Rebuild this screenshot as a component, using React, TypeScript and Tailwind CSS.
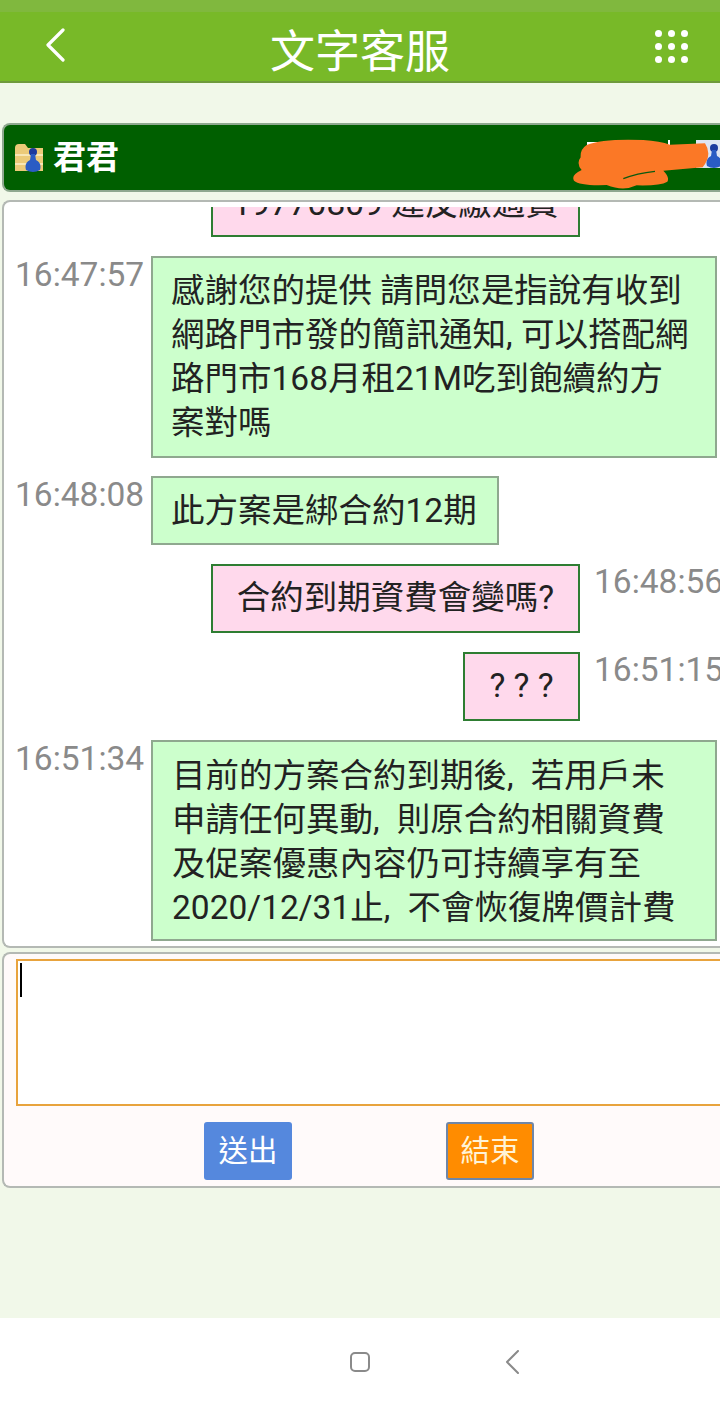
const CJK = "font-['Roboto','Noto_Sans_CJK_TC',sans-serif]";

function PersonIcon({ withFolder }: { withFolder?: boolean }) {
  return (
    <svg width="30" height="30" viewBox="0 0 30 30">
      {withFolder ? (
        <>
          <path d="M1 5 Q1 1 5 1 L11 1 L14 5 L29 5 L29 28 L1 28 Z" fill="#ecca78" />
          <path d="M1 12 L29 12 M1 21 L29 21" stroke="#f8e6b4" strokeWidth="2" />
        </>
      ) : (
        <rect x="1" y="1" width="28" height="28" fill="#dfe5f2" />
      )}
      <circle cx="19" cy="9" r="4" fill="#1c3a9e" />
      <path d="M17 11 L21 11 L22 17 Q28 20 26 27 Q19 31 12 27 Q10 20 16 17 Z" fill="#2a5cc4" />
    </svg>
  );
}

function Incoming({ time, lines, pad }: { time: string; lines: string[]; pad: string }) {
  return (
    <div className="flex items-start">
      <div className="w-[147px] shrink-0 whitespace-nowrap pl-[11px] pt-px text-[33.5px] leading-9 text-[#8a8a8a]">{time}</div>
      <div className={`${pad} border-2 border-[#8fa88f] bg-[#ccffcc] text-[33.5px] leading-[44px] text-[#222]`}>
        {lines.map((l) => (
          <div key={l} className="whitespace-nowrap">{l}</div>
        ))}
      </div>
    </div>
  );
}

function Outgoing({ time, text, width }: { time: string; text: string; width: string }) {
  return (
    <div className="flex items-start">
      <div className={`ml-auto h-[69px] ${width} border-2 border-[#2e7d32] bg-[#ffd9ec] text-center text-[33.5px] leading-[64px] text-[#222] whitespace-nowrap`}>
        {text}
      </div>
      <div className="ml-[14px] w-[126px] shrink-0 whitespace-nowrap text-[33.5px] leading-9 text-[#8a8a8a]">{time}</div>
    </div>
  );
}

export default function App() {
  return (
    <div className={`flex h-[1405px] w-[720px] flex-col overflow-hidden bg-[#f1f8e9] ${CJK}`}>
      <div className="h-3 bg-[#80b83e]" />
      <header className="flex h-[71px] items-center justify-between border-b-2 border-[#6f9a3c] bg-[#78b928] pl-[45px] pr-[32px] text-white">
        <svg width="20" height="34" viewBox="0 0 20 34" className="-mt-[3px]" fill="none" stroke="currentColor" strokeWidth="3.2" strokeLinecap="round" strokeLinejoin="round">
          <path d="M18 2 L3 17 L18 32" />
        </svg>
        <h1 className="mt-3 text-[45px] leading-none">文字客服</h1>
        <div className="grid grid-cols-3 gap-[6px]">
          {Array.from({ length: 9 }).map((_, i) => (
            <span key={i} className="h-[7px] w-[7px] rounded-full bg-white" />
          ))}
        </div>
      </header>

      <div className="relative ml-0.5 mt-10 flex h-[69px] items-center overflow-hidden rounded-l-lg border-2 border-r-0 border-[#8fa88f] bg-[#005f00] pl-2.5">
        <PersonIcon withFolder />
        <span className="ml-[9px] text-[33px] font-bold text-white">君君</span>
        <span className="absolute left-[583px] top-[17px] h-3 w-3 bg-white" />
        <span className="absolute left-[664px] top-[15px] h-5 w-0.5 bg-white" />
        <div className="absolute right-[-5px] top-[14px]"><PersonIcon /></div>
        <svg className="absolute left-[556px] top-[-5px]" width="160" height="80" viewBox="0 0 480 240">
          <path d="M80 75 Q130 55 250 60 Q300 64 330 74 L435 70 Q458 105 428 142 L310 152 Q330 172 322 185 Q300 198 230 196 Q190 215 140 195 Q60 198 42 182 Q32 165 65 150 Q48 130 62 112 Q60 88 80 75 Z" fill="#fb7826" />
          <path d="M190 176 Q230 160 285 154" stroke="#0b5a10" strokeWidth="4" fill="none" />
        </svg>
      </div>

      <div className="ml-0.5 mt-2 h-[748px] overflow-hidden rounded-l-lg border-2 border-r-0 border-[#b4b9b4] bg-white pt-[5px]">
        <div className="h-[30px] overflow-hidden">
          <div className="relative -top-[36px] ml-[207px] h-[66px] w-[369px] border-2 border-[#2e7d32] bg-[#ffd9ec] text-center text-[33.5px] leading-[62px] text-[#222]">
            19770809 違反繳過費
          </div>
        </div>
        <div className="mt-[19px] flex flex-col">
          <Incoming
            time="16:47:57"
            pad="h-[202px] w-[566px] pl-[18px] pt-[11px]"
            lines={['感謝您的提供 請問您是指說有收到', '網路門市發的簡訊通知, 可以搭配網', '路門市168月租21M吃到飽續約方', '案對嗎']}
          />
          <div className="mt-[18px]">
            <Incoming time="16:48:08" pad="h-[69px] w-[348px] pl-[18px] pt-[11px]" lines={['此方案是綁合約12期']} />
          </div>
          <div className="mt-[19px]">
            <Outgoing time="16:48:56" text="合約到期資費會變嗎?" width="w-[369px]" />
          </div>
          <div className="mt-[19px]">
            <Outgoing time="16:51:15" text="? ? ?" width="w-[117px]" />
          </div>
          <div className="mt-[19px]">
            <Incoming
              time="16:51:34"
              pad="h-[201px] w-[566px] pl-[19px] pt-[12px]"
              lines={['目前的方案合約到期後,\u2002若用戶未', '申請任何異動,\u2002則原合約相關資費', '及促案優惠內容仍可持續享有至', '2020/12/31止,\u2002不會恢復牌價計費']}
            />
          </div>
        </div>
      </div>

      <div className="ml-0.5 mt-1 h-[236px] rounded-l-lg border-2 border-r-0 border-[#b4b9b4] bg-[#fffafa] pl-3 pt-[5px]">
        <div className="relative h-[147px] border-2 border-r-0 border-[#e8a33d] bg-white">
          <span className="absolute left-[2px] top-[2px] h-[34px] w-0.5 bg-black" />
        </div>
        <div className="mt-4 flex">
          <button className="ml-[188px] h-[58px] w-[88px] rounded-[3px] bg-[#5588dd] text-[29.5px] text-white">送出</button>
          <button className="ml-[154px] h-[58px] w-[88px] rounded-[3px] border-2 border-[#6f86a8] bg-[#ff8c00] text-[29.5px] text-[#fff3d6]">結束</button>
        </div>
      </div>

      <div className="mt-auto flex h-[87px] items-center bg-white pl-[350px]">
        <span className="block h-5 w-5 rounded-[5px] border-2 border-[#8a8a8a]" />
        <svg width="14" height="24" viewBox="0 0 14 24" className="ml-[135px]" fill="none" stroke="#8a8a8a" strokeWidth="2" strokeLinecap="round" strokeLinejoin="round">
          <path d="M13 1 L2 12 L13 23" />
        </svg>
      </div>
    </div>
  );
}
